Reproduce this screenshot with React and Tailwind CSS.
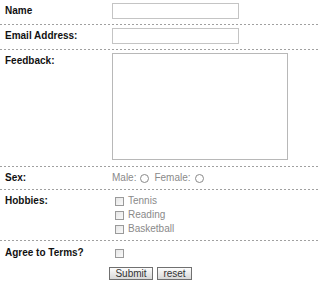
import React from "react";

const dash =
  "h-px w-full bg-[repeating-linear-gradient(90deg,#a0a0a0_0px,#a0a0a0_2px,transparent_2px,transparent_4px)]";

function Row({ label, children, className = "" }) {
  return (
    <div className={`flex ${className}`}>
      <div className="w-[112px] shrink-0 pl-[5px] text-[10px] font-bold text-[#111]">
        {label}
      </div>
      <div className="flex-1">{children}</div>
    </div>
  );
}

function Box() {
  return (
    <span className="inline-block h-[9px] w-[9px] border border-[#9a9a9a] bg-gradient-to-br from-[#e6e6e6] to-[#fafafa]" />
  );
}

function Radio() {
  return (
    <span className="inline-block h-[9px] w-[9px] rounded-full border border-[#8a8a8a] bg-white" />
  );
}

export default function App() {
  return (
    <div className="h-[284px] w-[320px] bg-white font-['Liberation_Sans',Arial,sans-serif]">
      <Row label="Name" className="items-start pt-[3px] pb-[5px]">
        <div className="h-4 w-[127px] border border-[#c4c4c4]" />
      </Row>
      <div className={dash} />

      <Row label="Email Address:" className="pt-[3px] pb-[5px]">
        <div className="h-4 w-[127px] border border-[#c4c4c4]" />
      </Row>
      <div className={dash} />

      <Row label="Feedback:" className="pt-[3px] pb-[6px]">
        <div className="h-[107px] w-[176px] border border-[#b8b8b8]" />
      </Row>
      <div className={dash} />

      <Row label="Sex:" className="pt-[5px] pb-[5px] leading-[12px]">
        <div className="flex items-center gap-[4px] text-[10px] leading-[12px] text-[#8a8a8a]">
          <span>Male:</span>
          <Radio />
          <span className="ml-[1px]">Female:</span>
          <Radio />
        </div>
      </Row>
      <div className={dash} />

      <Row label="Hobbies:" className="pt-[5px] pb-[5px] leading-[12px]">
        <div className="flex flex-col gap-[2px] pl-[3px] text-[10px] leading-[12px] text-[#8a8a8a]">
          {["Tennis", "Reading", "Basketball"].map((h) => (
            <label key={h} className="flex items-center gap-[4px]">
              <Box />
              <span>{h}</span>
            </label>
          ))}
        </div>
      </Row>
      <div className={dash} />

      <Row label="Agree to Terms?" className="pt-[6px] pb-[8px] leading-[12px]">
        <div className="flex h-3 items-center pl-[3px]">
          <Box />
        </div>
      </Row>

      <div className="flex gap-[4px] pl-[109px]">
        <button className="h-[13px] w-[44px] border border-[#707070] bg-gradient-to-b from-[#fdfdfd] to-[#d8d8d8] text-[10px] leading-[11px] text-[#333]">
          Submit
        </button>
        <button className="h-[13px] w-[35px] border border-[#707070] bg-gradient-to-b from-[#fdfdfd] to-[#d8d8d8] text-[10px] leading-[11px] text-[#333]">
          reset
        </button>
      </div>
    </div>
  );
}
